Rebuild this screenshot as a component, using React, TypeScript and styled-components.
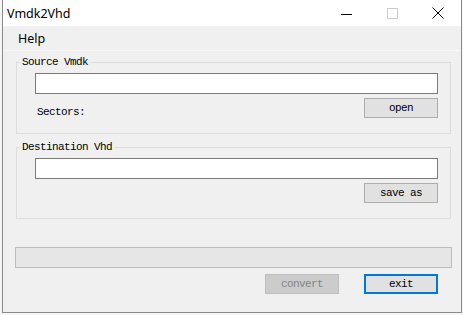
import React from 'react'
import styled, { createGlobalStyle } from 'styled-components'

const GlobalStyle = createGlobalStyle`
  html, body {
    margin: 0;
    padding: 0;
    background: #f6f6f6;
  }
`

const uiFont = `'Noto Sans', 'Noto Sans CJK SC', sans-serif`
const dlgFont = `'Liberation Mono', 'DejaVu Sans Mono', monospace`

const Window = styled.div`
  margin-left: 2px;
  width: 460px;
  height: 313px;
  box-sizing: border-box;
  border: 1px solid #8a8a8a;
  border-top: none;
  background: #f0f0f0;
  display: flex;
  flex-direction: column;
`

const TitleBar = styled.div`
  height: 26px;
  background: #ffffff;
  display: flex;
  align-items: center;
`

const Title = styled.div`
  flex: 1;
  padding-left: 4px;
  font-family: ${uiFont};
  font-size: 12.5px;
  color: #000;
`

const ControlButton = styled.div`
  width: 46px;
  height: 26px;
  display: flex;
  align-items: center;
  justify-content: center;
`

const MenuBar = styled.div`
  height: 25px;
  display: flex;
  align-items: center;
  padding-left: 15px;
  border-bottom: 1px solid #f7f7f7;
  box-sizing: border-box;
`

const MenuItem = styled.span`
  font-family: ${uiFont};
  font-size: 12.5px;
  color: #000;
`

const Client = styled.div`
  flex: 1;
  display: flex;
  flex-direction: column;
`

const GroupBox = styled.fieldset<{ $top: number }>`
  margin: ${({ $top }) => $top}px 10px 0 13px;
  padding: 0;
  border: 1px solid #dcdcdc;
  min-width: 0;
`

const GroupLegend = styled.legend`
  margin-left: 3px;
  padding: 0 2px;
  font-family: ${dlgFont};
  font-size: 11px;
  letter-spacing: -0.6px;
  line-height: 12px;
  color: #000;
`

const GroupBody = styled.div<{ $bottom: number }>`
  padding: 5px 12px ${({ $bottom }) => $bottom}px 18px;
  display: flex;
  flex-direction: column;
  gap: 4px;
`

const TextBox = styled.input`
  display: block;
  box-sizing: border-box;
  width: 100%;
  height: 21px;
  margin: 0;
  border: 1px solid #7a7a7a;
  background: #fff;
  outline: none;
`

const ActionRow = styled.div`
  display: flex;
  align-items: center;
  justify-content: space-between;
  height: 20px;
`

const FieldLabel = styled.span`
  align-self: flex-end;
  margin-bottom: 0;
  padding-left: 2px;
  line-height: 12px;
  font-family: ${dlgFont};
  font-size: 11px;
  letter-spacing: -0.6px;
  color: #000;
`

const PushButton = styled.button<{ $isDefault?: boolean }>`
  width: 74px;
  height: 20px;
  box-sizing: border-box;
  margin: 0;
  padding: 0;
  margin-left: auto;
  background: #e1e1e1;
  border: ${({ $isDefault }) => ($isDefault ? '2px solid #0078d7' : '1px solid #adadad')};
  font-family: ${dlgFont};
  font-size: 11px;
  letter-spacing: -0.6px;
  color: #000;

  &:disabled {
    background: #cccccc;
    border-color: #bfbfbf;
    color: #838383;
  }
`

const ProgressBar = styled.div`
  margin: 28px 9px 0 12px;
  height: 21px;
  box-sizing: border-box;
  border: 1px solid #bcbcbc;
  background: #e6e6e6;
`

const ButtonRow = styled.div`
  display: flex;
  justify-content: flex-end;
  gap: 25px;
  margin-top: 6px;
  padding-right: 23px;

  & > button {
    margin-left: 0;
  }
`

const MinIcon = () =>
  <svg width='11' height='11' viewBox='0 0 11 11'>
    <path d='M0 6.5 H11' stroke='#000' strokeWidth='1' />
  </svg>

const MaxIcon = () =>
  <svg width='11' height='11' viewBox='0 0 11 11'>
    <rect x='0.5' y='0.5' width='10' height='10' fill='none' stroke='#cccccc' strokeWidth='1' />
  </svg>

const CloseIcon = () =>
  <svg width='12' height='12' viewBox='0 0 12 12'>
    <path d='M0.5 0.5 L11.5 11.5 M11.5 0.5 L0.5 11.5' stroke='#000' strokeWidth='1' />
  </svg>

const App = () =>
  <>
    <GlobalStyle />
    <Window>
      <TitleBar>
        <Title>Vmdk2Vhd</Title>
        <ControlButton><MinIcon /></ControlButton>
        <ControlButton><MaxIcon /></ControlButton>
        <ControlButton><CloseIcon /></ControlButton>
      </TitleBar>
      <MenuBar>
        <MenuItem>Help</MenuItem>
      </MenuBar>
      <Client>
        <GroupBox $top={5}>
          <GroupLegend>Source Vmdk</GroupLegend>
          <GroupBody $bottom={15}>
            <TextBox />
            <ActionRow>
              <FieldLabel>Sectors:</FieldLabel>
              <PushButton>open</PushButton>
            </ActionRow>
          </GroupBody>
        </GroupBox>
        <GroupBox $top={7}>
          <GroupLegend>Destination Vhd</GroupLegend>
          <GroupBody $bottom={15}>
            <TextBox />
            <ActionRow>
              <PushButton>save as</PushButton>
            </ActionRow>
          </GroupBody>
        </GroupBox>
        <ProgressBar />
        <ButtonRow>
          <PushButton disabled>convert</PushButton>
          <PushButton $isDefault>exit</PushButton>
        </ButtonRow>
      </Client>
    </Window>
  </>

export default App
